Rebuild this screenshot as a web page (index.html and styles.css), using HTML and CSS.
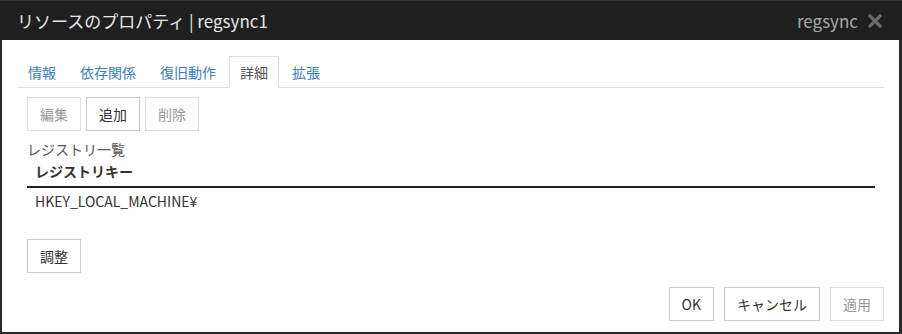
FILE: index.html
```html
<!DOCTYPE html>
<html lang="ja">
  <head>
    <meta charset="UTF-8" />
    <title>リソースのプロパティ</title>
    <link rel="stylesheet" href="styles.css">
  </head>
  <body>
    <div class="dialog">
      <div class="dialog-header">
        <span class="dialog-title">リソースのプロパティ | regsync1</span>
        <span class="dialog-type">regsync</span>
        <svg class="dialog-close" width="14" height="14" viewBox="0 0 14 14">
          <path d="M2 2 L12 12 M12 2 L2 12" stroke="#6a6a6a" stroke-width="3.2" stroke-linecap="square" />
        </svg>
      </div>
      <div class="dialog-body">
        <ul class="tabs">
          <li><a>情報</a></li>
          <li><a>依存関係</a></li>
          <li><a>復旧動作</a></li>
          <li class="active"><a>詳細</a></li>
          <li><a>拡張</a></li>
        </ul>
        <div class="toolbar">
          <button class="btn" disabled>編集</button>
          <button class="btn">追加</button>
          <button class="btn" disabled>削除</button>
        </div>
        <div class="list-label">レジストリ一覧</div>
        <table class="reg-table">
          <thead>
            <tr><th>レジストリキー</th></tr>
          </thead>
          <tbody>
            <tr><td>HKEY_LOCAL_MACHINE¥</td></tr>
          </tbody>
        </table>
        <button class="btn adjust">調整</button>
      </div>
      <div class="dialog-footer">
        <button class="btn">OK</button>
        <button class="btn">キャンセル</button>
        <button class="btn" disabled>適用</button>
      </div>
    </div>
  </body>
</html>
```

FILE: styles.css
```css
:root {
  --frame: #2b2b2b;
  --header-bg: #1f1f1f;
  --link: #3a7fc1;
  --text: #333;
  --border: #ccc;
}

* {
  box-sizing: border-box;
}

body {
  margin: 0;
  background: var(--frame);
  font-family: "Noto Sans CJK JP", "Noto Sans", sans-serif;
  font-size: 14px;
  color: var(--text);
}

.dialog {
  width: 902px;
  height: 334px;
  display: flex;
  flex-direction: column;
  background: #fff;
  border-left: 2px solid var(--frame);
  border-right: 3px solid var(--frame);
  border-bottom: 2px solid var(--frame);
}

/* Заголовок */
.dialog-header {
  height: 40px;
  margin-left: -2px;
  margin-right: -3px;
  padding: 0 20px 0 17px;
  display: flex;
  align-items: center;
  background: var(--header-bg);
  border-top: 1px solid #333;
}

.dialog-title {
  flex: 1;
  color: #e6e6e6;
  font-size: 17px;
}

.dialog-type {
  color: #a8a8a8;
  font-size: 17px;
  margin-right: 10px;
}

.dialog-close {
  display: block;
}

.dialog-body {
  flex: 1;
  padding: 16px 15px 0 15px;
}

/* Вкладки */
.tabs {
  list-style: none;
  margin: 0;
  padding: 0;
  display: flex;
  border-bottom: 1px solid #ddd;
}

.tabs li {
  margin-right: 2px;
  margin-bottom: -1px;
}

.tabs a {
  display: block;
  padding: 5px 10px;
  line-height: 20px;
  border: 1px solid transparent;
  color: var(--link);
}

.tabs li.active a {
  color: #555;
  background: #fff;
  border-color: #ddd #ddd transparent;
}

/* Кнопки */
.btn {
  font-family: inherit;
  font-size: 14px;
  line-height: 20px;
  padding: 6px 12px;
  color: var(--text);
  background: #fff;
  border: 1px solid var(--border);
  border-radius: 0;
}

.btn:disabled {
  color: #999;
  border-color: #ddd;
}

.toolbar {
  display: flex;
  gap: 5px;
  margin: 9px 0 0 10px;
}

.list-label {
  margin: 8px 0 0 10px;
  color: #555;
  line-height: 20px;
}

/* Таблица */
.reg-table {
  width: 848px;
  margin: 0 0 0 10px;
  border-collapse: collapse;
}

.reg-table th {
  text-align: left;
  font-weight: bold;
  padding: 2px 8px 5px;
  line-height: 20px;
  border-bottom: 2px solid #222;
}

.reg-table td {
  padding: 3px 8px 5px;
  line-height: 20px;
  color: #333;
}

.adjust {
  margin: 23px 0 0 10px;
}

.dialog-footer {
  display: flex;
  justify-content: flex-end;
  gap: 10px;
  padding: 0 15px 11px 0;
}
```
